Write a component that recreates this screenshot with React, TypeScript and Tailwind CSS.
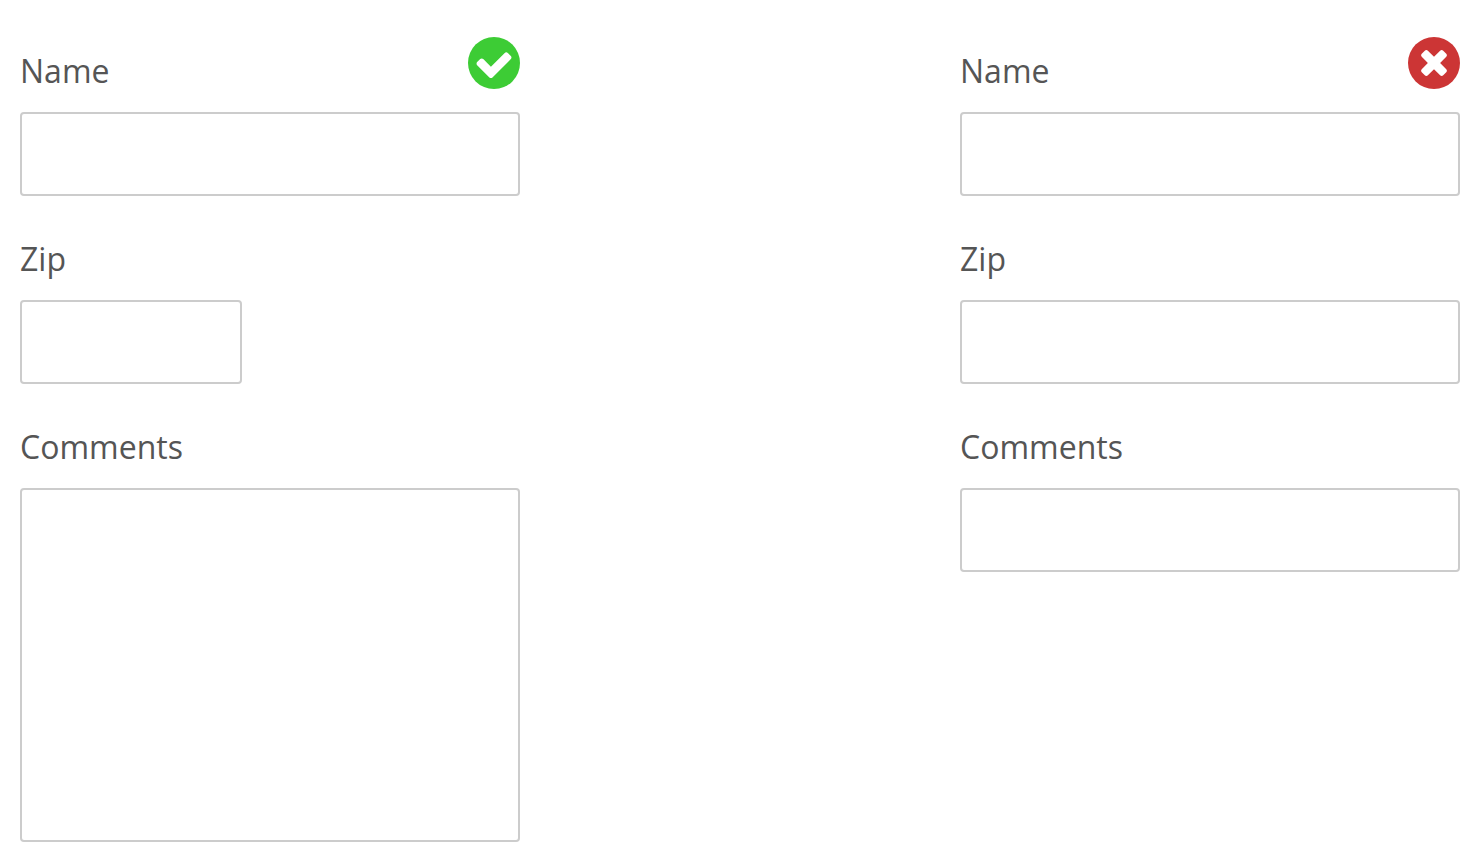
import React, { useId } from 'react';

const fieldClass =
  'block border-2 border-[#cccccc] rounded-sm bg-white px-4 text-[32px] text-[#555555] focus:outline-none focus:border-gray-500';

type FieldProps = {
  label: string;
  wide?: boolean;
  multiline?: boolean;
  icon?: React.ReactNode;
};

function CheckCircle() {
  return (
    <svg role="img" aria-label="Good example" viewBox="0 0 1536 1536" className="w-13 h-13 shrink-0">
      <circle cx="768" cy="768" r="768" className="fill-[#3dcc35]" />
      <path
        className="fill-white"
        d="M1284 606q0-28-18-46l-91-90q-19-19-45-19t-45 19l-408 407-226-226q-19-19-45-19t-45 19l-91 90q-18 18-18 46 0 27 18 45l362 362q19 19 45 19 27 0 46-19l543-543q18-18 18-45z"
      />
    </svg>
  );
}

function TimesCircle() {
  return (
    <svg role="img" aria-label="Bad example" viewBox="0 128 1536 1536" className="w-13 h-13 shrink-0">
      <circle cx="768" cy="896" r="768" className="fill-[#cc3535]" />
      <path
        className="fill-white"
        d="M1149 1122q0-26-19-45l-181-181 181-181q19-19 19-45 0-27-19-46l-90-90q-19-19-46-19-26 0-45 19l-181 181-181-181q-19-19-45-19-27 0-46 19l-90 90q-19 19-19 46 0 26 19 45l181 181-181 181q-19 19-19 45 0 27 19 46l90 90q19 19 46 19 26 0 45-19l181-181 181 181q19 19 45 19 27 0 46-19l90-90q19-19 19-46z"
      />
    </svg>
  );
}

function Field({ label, wide = true, multiline = false, icon }: FieldProps) {
  const id = useId();

  return (
    <div>
      <div className="flex items-start justify-between h-[75px]">
        <label htmlFor={id} className="pt-3 text-[32px] leading-[44px] text-[#555555]">
          {label}
        </label>
        {icon}
      </div>
      {multiline ? (
        <textarea id={id} rows={7} className={`${fieldClass} w-full py-[7px] leading-[48px] resize-none`} />
      ) : (
        <input id={id} type="text" className={`${fieldClass} h-[84px] ${wide ? 'w-full' : 'w-[222px]'}`} />
      )}
    </div>
  );
}

export default function App() {
  return (
    <main
      className="flex justify-between gap-10 px-5 pt-[37px] pb-5 bg-white"
      style={{ fontFamily: '"Open Sans", "Noto Sans", sans-serif' }}
    >
      <form className="flex flex-col gap-[29px] w-full max-w-[500px]">
        <Field label="Name" icon={<CheckCircle />} />
        <Field label="Zip" wide={false} />
        <Field label="Comments" multiline />
      </form>

      <form className="flex flex-col gap-[29px] w-full max-w-[500px]">
        <Field label="Name" icon={<TimesCircle />} />
        <Field label="Zip" />
        <Field label="Comments" />
      </form>
    </main>
  );
}
